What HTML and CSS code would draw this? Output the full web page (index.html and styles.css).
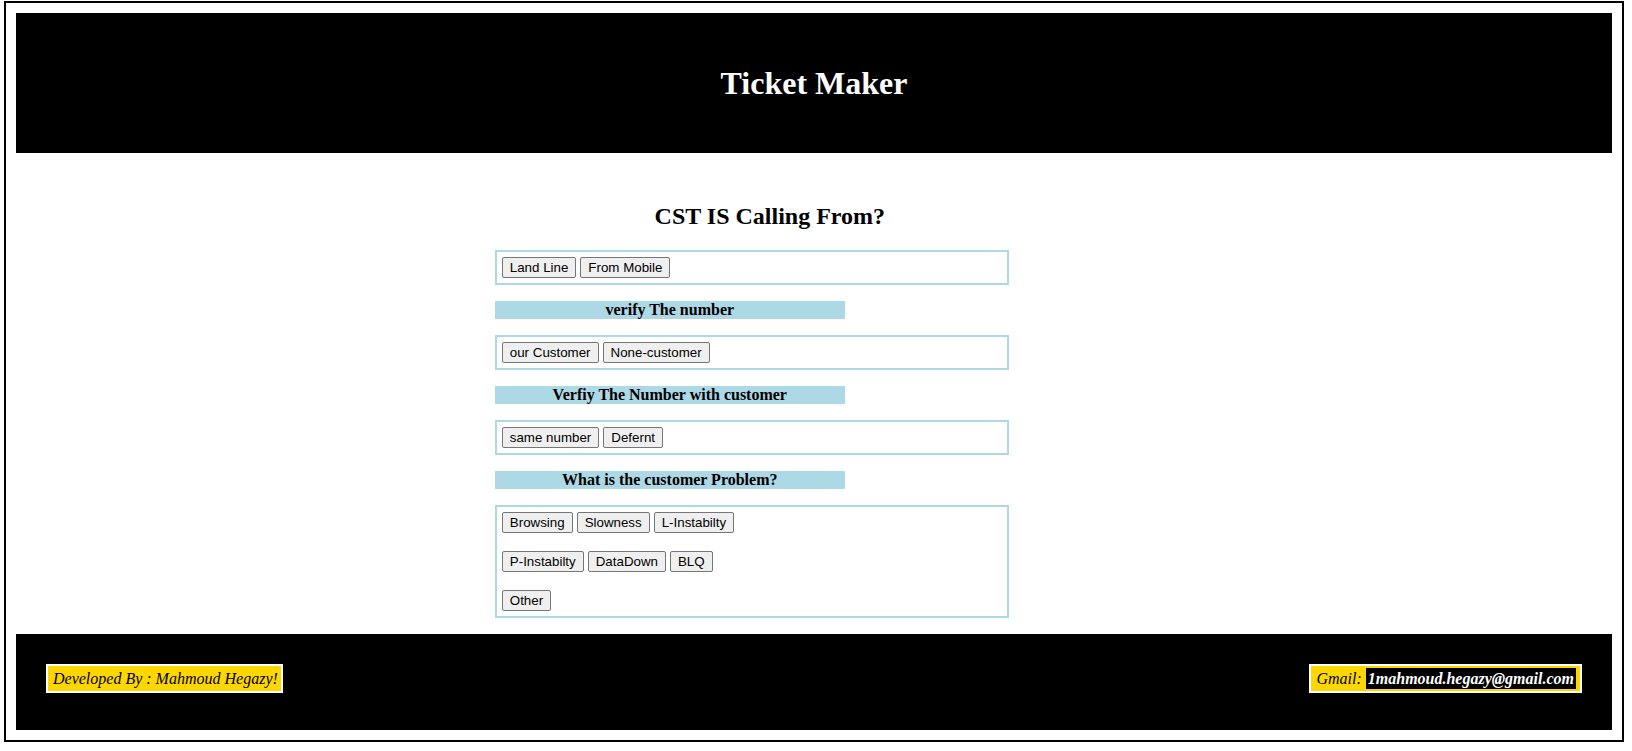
FILE: index.html
```html
<!DOCTYPE html>
<html>
<head>
<meta charset="utf-8">
<title>Ticket Maker</title>
<link rel="stylesheet" href="styles.css">
</head>
<body>
<div class="page">
  <header class="top">
    <h1 class="brand">Ticket Maker</h1>
  </header>
  <main class="main">
    <h2 class="question">CST IS Calling From?</h2>
    <div class="box">
      <div class="row">
        <button class="btn">Land Line</button>
        <button class="btn">From Mobile</button>
      </div>
    </div>
    <div class="label">verify The number</div>
    <div class="box">
      <div class="row">
        <button class="btn">our Customer</button>
        <button class="btn">None-customer</button>
      </div>
    </div>
    <div class="label">Verfiy The Number with customer</div>
    <div class="box">
      <div class="row">
        <button class="btn">same number</button>
        <button class="btn">Defernt</button>
      </div>
    </div>
    <div class="label">What is the customer Problem?</div>
    <div class="box rows">
      <div class="row">
        <button class="btn">Browsing</button>
        <button class="btn">Slowness</button>
        <button class="btn">L-Instabilty</button>
      </div>
      <div class="row">
        <button class="btn">P-Instabilty</button>
        <button class="btn">DataDown</button>
        <button class="btn">BLQ</button>
      </div>
      <div class="row">
        <button class="btn">Other</button>
      </div>
    </div>
  </main>
  <footer class="bottom">
    <div class="tag dev">Developed By : Mahmoud Hegazy!</div>
    <div class="tag mail">Gmail: <span class="email">1mahmoud.hegazy@gmail.com</span></div>
  </footer>
</div>
</body>
</html>
```

FILE: styles.css
```css
html, body {
  margin: 0;
  padding: 0;
  background: #fff;
}

body {
  font-family: "Liberation Serif", "Times New Roman", serif;
  font-size: 16px;
  color: #000;
}

.page {
  margin: 1px 8px 10px 4px;
  border: 2px solid #000;
  padding: 10px;
}

.top {
  background: #000;
  padding: 52px 0;
  text-align: center;
}

.brand {
  margin: 0;
  font-size: 32px;
  line-height: 36px;
  font-weight: bold;
  color: #fff;
}

.main {
  margin-left: 30%;
  width: 550px;
  padding-top: 30px;
  padding-bottom: 16px;
  display: flex;
  flex-direction: column;
  align-items: flex-start;
  gap: 16px;
}

.question {
  align-self: stretch;
  text-align: center;
  font-size: 24px;
  font-weight: bold;
  margin: 20px 0 4px;
}

.box {
  width: 500px;
  border: 2px solid #add8e6;
  padding: 5px;
}

.rows {
  display: flex;
  flex-direction: column;
  gap: 18px;
}

.row {
  display: flex;
  gap: 4px;
}

.btn {
  font-family: "Liberation Sans", Arial, sans-serif;
  font-size: 13.333px;
  height: 21px;
  padding: 0 7px;
  background: #efefef;
  border: 1px solid #767676;
  border-radius: 2px;
  color: #000;
  margin: 0;
}

.label {
  width: 350px;
  height: 18px;
  line-height: 18px;
  background: #add8e6;
  text-align: center;
  font-weight: bold;
  font-size: 16px;
}

.bottom {
  background: #000;
  height: 96px;
  box-sizing: border-box;
  padding: 30px;
  display: flex;
  justify-content: space-between;
  align-items: flex-start;
}

.tag {
  background: #ffd700;
  border: 2px solid #fff;
  padding: 2px 4px 2px 5px;
  height: 21px;
  line-height: 21px;
  font-style: italic;
  font-size: 16px;
  color: #000;
}

.dev {
  padding-right: 3px;
}

.email {
  display: inline-block;
  background: #000;
  color: #fff;
  font-weight: bold;
  font-size: 16px;
  line-height: 21px;
  height: 21px;
  padding: 0 2px;
  vertical-align: top;
}
```
